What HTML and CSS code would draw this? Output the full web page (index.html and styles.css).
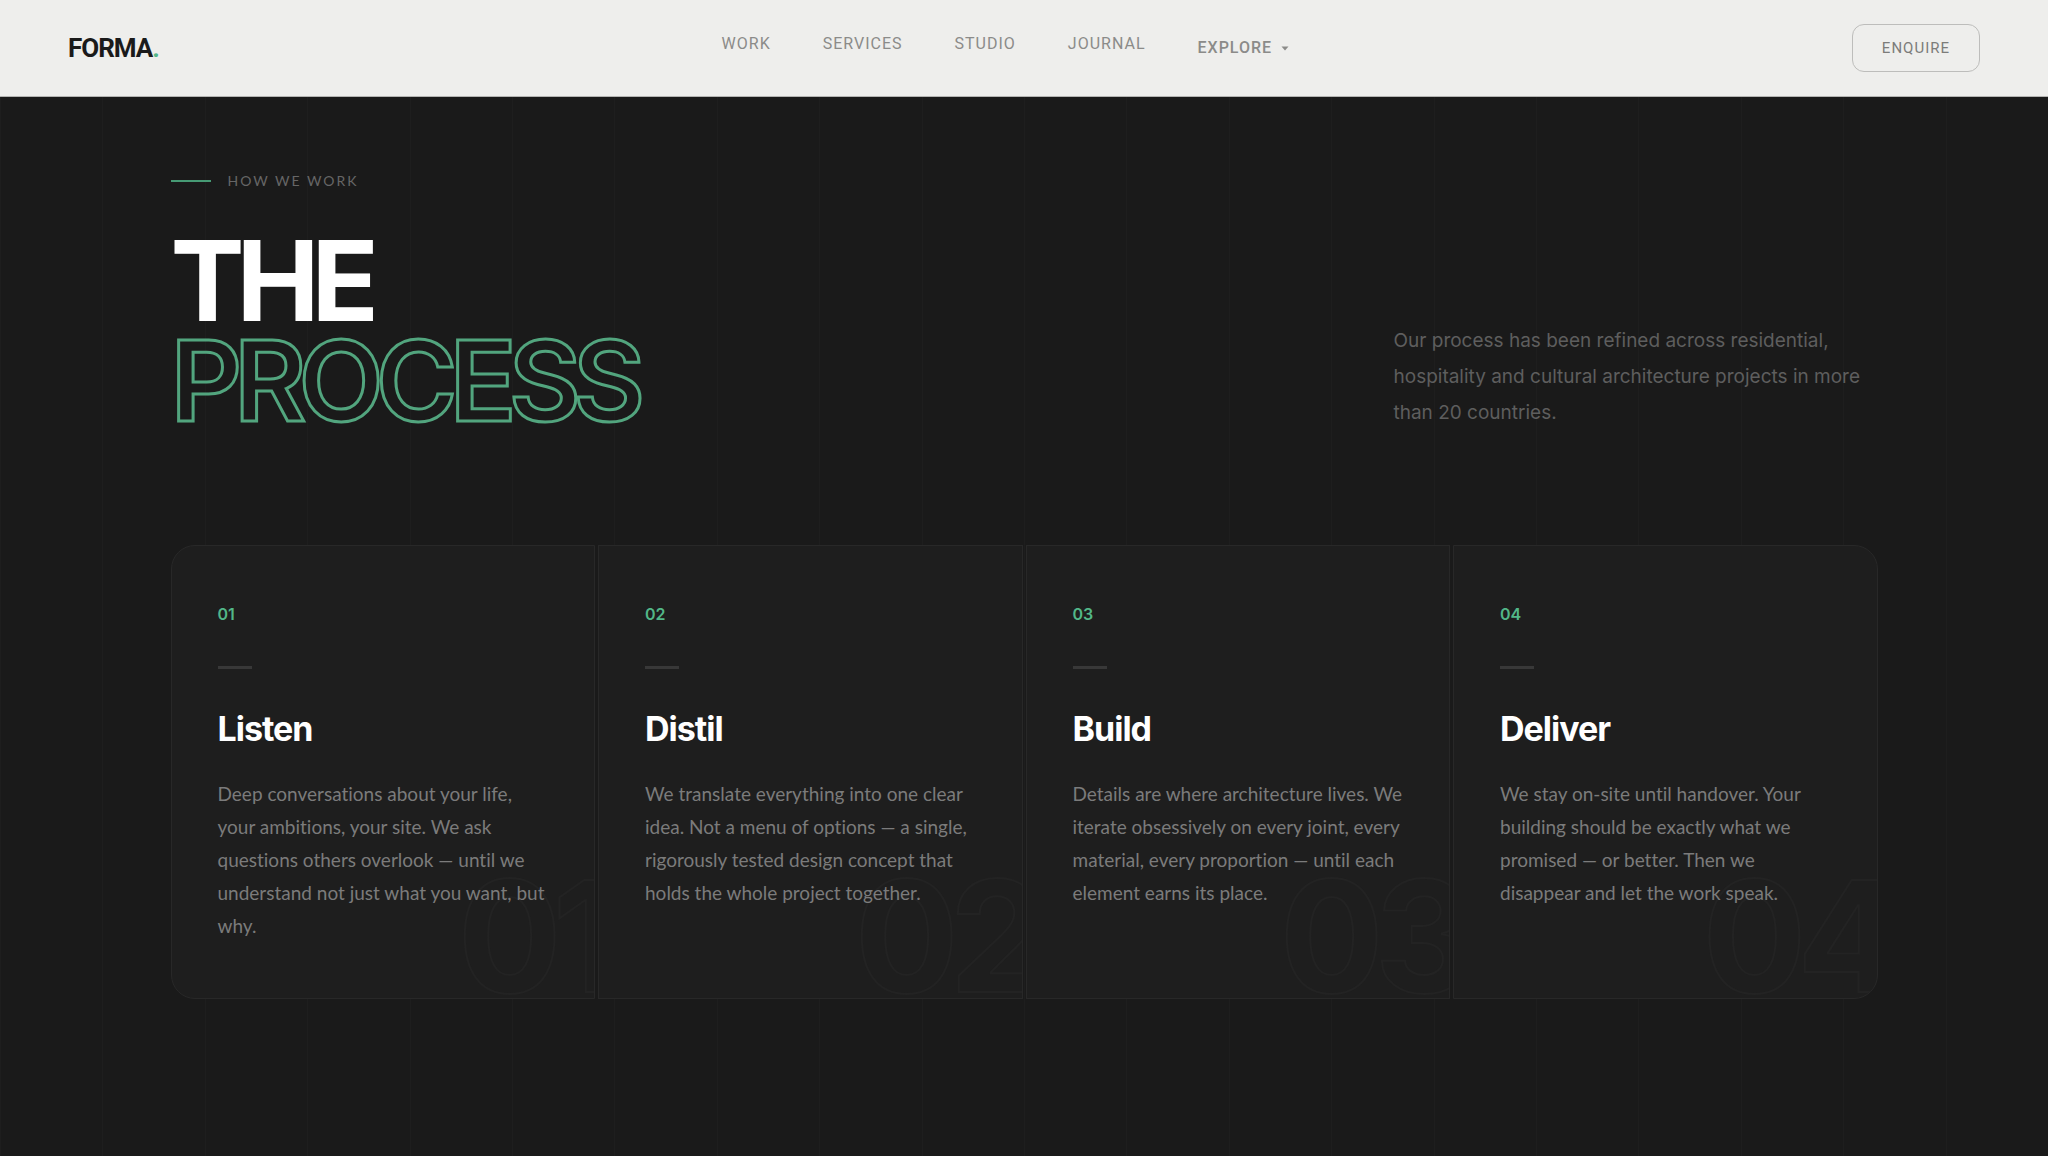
FILE: index.html
```
<!DOCTYPE html>
<html lang="en">
<head>
<meta charset="UTF-8">
<meta name="viewport" content="width=device-width, initial-scale=1.0">
<title>FORMA. - Process</title>
<link rel="stylesheet" href="styles.css">
</head>
<body>

<header class="site-header">
  <a href="#" class="logo">FORMA<span class="logo-dot">.</span></a>
  <nav class="nav" aria-label="Main">
    <a href="#work">Work</a>
    <a href="#services">Services</a>
    <a href="#studio">Studio</a>
    <a href="#journal">Journal</a>
    <button type="button" class="nav-toggle" aria-haspopup="true" aria-expanded="false">
      Explore
      <svg class="caret" viewBox="0 0 8 5" aria-hidden="true"><path d="M0.5 0.5h7L4 4.5z"/></svg>
    </button>
  </nav>
  <button type="button" class="enquire">Enquire</button>
</header>

<main class="process">
  <div class="container">
    <p class="eyebrow">How we work</p>

    <div class="process-head">
      <h1 class="title">The<span class="title-outline">Process</span></h1>
      <p class="intro">Our process has been refined across residential, hospitality and cultural architecture projects in more than 20 countries.</p>
    </div>

    <div class="steps">
      <article class="step">
        <span class="step-ghost" aria-hidden="true">01</span>
        <p class="step-num">01</p>
        <h2>Listen</h2>
        <p class="step-text">Deep conversations about your life, your ambitions, your site. We ask questions others overlook — until we understand not just what you want, but why.</p>
      </article>
      <article class="step">
        <span class="step-ghost" aria-hidden="true">02</span>
        <p class="step-num">02</p>
        <h2>Distil</h2>
        <p class="step-text">We translate everything into one clear idea. Not a menu of options — a single, rigorously tested design concept that holds the whole project together.</p>
      </article>
      <article class="step">
        <span class="step-ghost" aria-hidden="true">03</span>
        <p class="step-num">03</p>
        <h2>Build</h2>
        <p class="step-text">Details are where architecture lives. We iterate obsessively on every joint, every material, every proportion — until each element earns its place.</p>
      </article>
      <article class="step">
        <span class="step-ghost" aria-hidden="true">04</span>
        <p class="step-num">04</p>
        <h2>Deliver</h2>
        <p class="step-text">We stay on-site until handover. Your building should be exactly what we promised — or better. Then we disappear and let the work speak.</p>
      </article>
    </div>
  </div>
</main>

</body>
</html>
```
FILE: styles.css
```
* {
  box-sizing: border-box;
}

body {
  margin: 0;
  min-height: 100vh;
  display: flex;
  flex-direction: column;
  background: #1a1a1a;
  color: #fff;
  font-family: Lato, "Liberation Sans", sans-serif;
  font-variant-ligatures: none;
}

h1, h2, p {
  margin: 0;
}

/* header */
.site-header {
  display: flex;
  justify-content: space-between;
  align-items: center;
  padding: 24px 68px;
  background: #eeeeec;
  border-bottom: 1px solid #b4b4b2;
  font-family: Roboto, "Liberation Sans", sans-serif;
}

.logo {
  color: #1a1a1a;
  font-size: 26px;
  font-weight: 700;
  letter-spacing: -1px;
  text-decoration: none;
}

.logo-dot {
  color: #52b788;
}

.nav {
  display: flex;
  align-items: center;
  gap: 52px;
}

.nav a,
.nav-toggle {
  color: #8b8b89;
  font-family: inherit;
  font-size: 16px;
  line-height: 20px;
  letter-spacing: 1px;
  text-transform: uppercase;
  text-decoration: none;
}

.nav a {
  padding-bottom: 8px;
}

.nav-toggle {
  display: flex;
  align-items: center;
  gap: 9px;
  padding: 0;
  border: 0;
  background: none;
  font-weight: 500;
  cursor: pointer;
}

.caret {
  width: 8px;
  height: 5px;
  fill: currentColor;
}

.enquire {
  padding: 12px 29px;
  border: 1px solid #bdbdbb;
  border-radius: 12px;
  background: none;
  color: #7c7c7a;
  font-family: inherit;
  font-size: 15px;
  line-height: 22px;
  letter-spacing: 1px;
  text-transform: uppercase;
  cursor: pointer;
}

/* process section, with faint vertical lines every 5% */
.process {
  flex: 1;
  padding: 72px 24px 120px;
  background: repeating-linear-gradient(to right, #1e1e1e 0 1px, transparent 1px 5vw);
}

.container {
  max-width: 1707px;
  margin: 0 auto;
}

.eyebrow {
  display: flex;
  align-items: center;
  gap: 17px;
  color: #666;
  font-size: 14px;
  line-height: 24px;
  letter-spacing: 2px;
  text-transform: uppercase;
}

.eyebrow::before {
  content: "";
  width: 40px;
  height: 2px;
  background: #469a74;
}

.process-head {
  display: flex;
  justify-content: space-between;
  align-items: flex-end;
  gap: 48px;
  margin: 38px 0 114px;
}

.title,
.intro,
.step-num,
.step h2,
.step-ghost {
  font-family: Inter, "Liberation Sans", sans-serif;
}

.title {
  font-size: 111px;
  font-weight: 700;
  line-height: 100px;
  letter-spacing: -8px;
  text-transform: uppercase;
}

.title-outline {
  display: block;
  color: transparent;
  font-weight: 600;
  -webkit-text-stroke: 3px #52a57e;
}

.intro {
  width: 484px;
  color: #5e5e5e;
  font-size: 19px;
  line-height: 36px;
}

/* steps */
.steps {
  display: grid;
  grid-template-columns: repeat(4, 1fr);
  gap: 3px;
}

.step {
  position: relative;
  overflow: hidden;
  padding: 56px 46px;
  border: 1px solid #282828;
  background: #1e1e1e;
}

.step:first-child {
  border-radius: 24px 0 0 24px;
}

.step:last-child {
  border-radius: 0 24px 24px 0;
}

.step-num {
  color: #52b788;
  font-size: 16px;
  font-weight: 600;
  line-height: 24px;
}

.step-num::after {
  content: "";
  display: block;
  width: 34px;
  height: 3px;
  margin: 40px 0;
  background: #383838;
}

.step h2 {
  margin-bottom: 28px;
  font-size: 34px;
  font-weight: 700;
  line-height: 40px;
  letter-spacing: -1px;
}

.step-text {
  position: relative;
  color: #7b7b7b;
  font-size: 19px;
  line-height: 33px;
}

.step-ghost {
  position: absolute;
  right: -16px;
  bottom: -18px;
  color: transparent;
  font-size: 154px;
  font-weight: 700;
  line-height: 160px;
  letter-spacing: -9px;
  -webkit-text-stroke: 2px #232323;
}

@media (max-width: 1200px) {
  .site-header {
    padding: 24px;
  }

  .nav {
    gap: 24px;
  }

  .steps {
    grid-template-columns: repeat(2, 1fr);
  }

  .step:nth-child(n) {
    border-radius: 0;
  }
}

@media (max-width: 760px) {
  .site-header {
    flex-wrap: wrap;
    gap: 16px;
  }

  .nav {
    flex-wrap: wrap;
  }

  .process-head {
    flex-direction: column;
    align-items: flex-start;
    margin-bottom: 56px;
  }

  .title {
    font-size: 64px;
    line-height: 60px;
    letter-spacing: -3px;
  }

  .intro {
    width: auto;
  }

  .steps {
    grid-template-columns: 1fr;
  }
}
```
